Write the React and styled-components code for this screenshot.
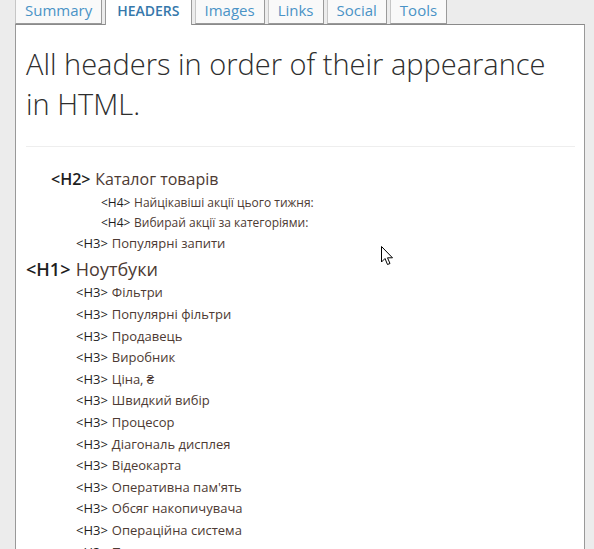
import React from 'react';
import styled, { createGlobalStyle } from 'styled-components';

const GlobalStyle = createGlobalStyle`
  html, body {
    margin: 0;
    padding: 0;
    background: #ececec;
    overflow: hidden;
  }
  body {
    font-family: "Open Sans", "Liberation Sans", sans-serif;
  }
`;

const Page = styled.div`
  position: relative;
  width: 594px;
  height: 549px;
  padding-left: 15px;
  box-sizing: border-box;
  overflow: hidden;
`;

const TabBar = styled.div`
  display: flex;
  align-items: flex-start;
  gap: 3px;
  height: 24px;
`;

const Tab = styled.div`
  position: relative;
  z-index: ${p => (p.active ? 2 : 1)};
  box-sizing: border-box;
  height: ${p => (p.active ? '25px' : '24px')};
  padding: 0 ${p => (p.active ? '11px' : '9px')};
  padding-bottom: ${p => (p.active ? '5px' : '4px')};
  display: flex;
  align-items: center;
  background: ${p => (p.active ? '#fff' : '#f9f9f9')};
  border: 1px solid ${p => (p.active ? '#999' : '#c6c6c6')};
  border-right-color: #9a9a9a;
  border-top: none;
  border-bottom: ${p => (p.active ? 'none' : '1px solid #999')};
  font-size: ${p => (p.active ? '14px' : '15px')};
  font-weight: ${p => (p.active ? 600 : 400)};
  color: ${p => (p.active ? '#3678ab' : '#4a93c6')};
  white-space: nowrap;
`;

const Panel = styled.div`
  box-sizing: border-box;
  width: 570px;
  min-height: 600px;
  background: #fff;
  border: 1px solid #999;
  border-top-color: #8a8a8a;
  padding: 9px 9px 0 10px;
  position: relative;
  z-index: 1;
`;

const Title = styled.h1`
  margin: 10px 0 0;
  font-size: 29px;
  line-height: 40px;
  font-weight: 300;
  color: #2e2e2e;
  padding-bottom: 22px;
  border-bottom: 1px solid #eee;
`;

const List = styled.div`
  display: flex;
  flex-direction: column;
  padding-top: 19px;
`;

const levels = {
  1: { size: 18, height: 26, indent: 0, gap: 2, weight: 600 },
  2: { size: 16, height: 26, indent: 25, gap: 0, weight: 600 },
  3: { size: 13, height: 21.6, indent: 50, gap: 0, weight: 400 },
  4: { size: 12, height: 20, indent: 75, gap: 0, weight: 400 },
};

const Row = styled.div`
  display: flex;
  align-items: center;
  gap: 0.3em;
  height: ${p => levels[p.level].height}px;
  margin-top: ${p => levels[p.level].gap}px;
  padding-left: ${p => levels[p.level].indent}px;
  font-size: ${p => levels[p.level].size}px;
  color: #4d3a33;
  white-space: nowrap;
`;

const Tag = styled.span`
  font-weight: ${p => levels[p.level].weight};
  color: #1e1e1e;
`;

const Cursor = styled.svg`
  position: absolute;
  left: 381px;
  top: 246px;
  z-index: 5;
`;

const TABS = ['Summary', 'HEADERS', 'Images', 'Links', 'Social', 'Tools'];

const HEADERS = [
  [2, 'Каталог товарів'],
  [4, 'Найцікавіші акції цього тижня:'],
  [4, 'Вибирай акції за категоріями:'],
  [3, 'Популярні запити'],
  [1, 'Ноутбуки'],
  [3, 'Фільтри'],
  [3, 'Популярні фільтри'],
  [3, 'Продавець'],
  [3, 'Виробник'],
  [3, 'Ціна, ₴'],
  [3, 'Швидкий вибір'],
  [3, 'Процесор'],
  [3, 'Діагональ дисплея'],
  [3, 'Відеокарта'],
  [3, "Оперативна пам'ять"],
  [3, 'Обсяг накопичувача'],
  [3, 'Операційна система'],
  [3, 'Покриття екрана'],
];

export default function App() {
  return (
    <>
      <GlobalStyle />
      <Page>
        <TabBar>
          {TABS.map(t => (
            <Tab key={t} active={t === 'HEADERS'}>{t}</Tab>
          ))}
        </TabBar>
        <Panel>
          <Title>All headers in order of their appearance in HTML.</Title>
          <List>
            {HEADERS.map(([level, text], i) => (
              <Row key={i} level={level}>
                <Tag level={level}>&lt;H{level}&gt;</Tag>
                <span>{text}</span>
              </Row>
            ))}
          </List>
        </Panel>
        <Cursor width="13" height="20" viewBox="0 0 13 20">
          <path
            d="M0.5 0.5 L0.5 16 L4 12.5 L6.5 18.5 L9 17.5 L6.5 11.8 L11.5 11.8 Z"
            fill="#fff"
            stroke="#000"
            strokeWidth="1"
            strokeLinejoin="miter"
          />
        </Cursor>
      </Page>
    </>
  );
}
